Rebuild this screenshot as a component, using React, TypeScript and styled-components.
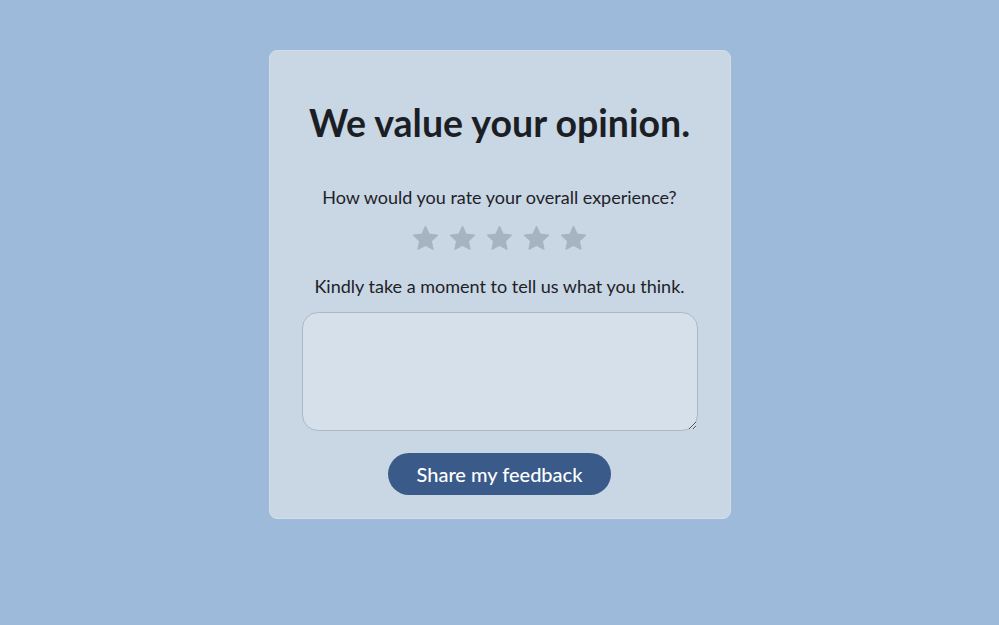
import styled, { createGlobalStyle } from 'styled-components';

const GlobalStyle = createGlobalStyle`
  html, body {
    margin: 0;
    padding: 0;
    background: #9dbadb;
  }
  body {
    font-family: "Lato", "Noto Sans", sans-serif;
  }
`;

const Page = styled.div`
  width: 100%;
  min-height: 625px;
  display: flex;
  justify-content: center;
  align-items: flex-start;
  padding-top: 50px;
  box-sizing: border-box;
`;

const Card = styled.div`
  width: 462px;
  box-sizing: border-box;
  background: #c9d6e3;
  border: 1px solid #d3dde8;
  border-radius: 8px;
  padding: 48px 33px 23px;
  display: flex;
  flex-direction: column;
  align-items: center;
  text-align: center;
`;

const Title = styled.h1`
  margin: 0;
  font-size: 37.5px;
  font-weight: 700;
  color: #1b1f25;
  line-height: 48px;
  white-space: nowrap;
`;

const Prompt = styled.p<{ $top: number }>`
  margin: ${({ $top }) => $top}px 0 0;
  font-size: 18px;
  line-height: 24px;
  color: #1d2229;
  white-space: nowrap;
`;

const Stars = styled.div`
  display: flex;
  gap: 8px;
  margin-top: 15px;
  height: 30px;
`;

const Star = styled.svg`
  width: 29px;
  height: 29px;
  fill: #a7b3c1;
  stroke: #a7b3c1;
  stroke-width: 1.2;
  stroke-linejoin: round;
`;

const Feedback = styled.textarea`
  margin-top: 14px;
  width: 396px;
  height: 119px;
  flex-shrink: 0;
  box-sizing: border-box;
  background: #d5e0ea;
  border: 1px solid #abb9c9;
  border-radius: 16px;
  font-family: inherit;
  font-size: 16px;
  padding: 10px 14px;
  outline: none;
`;

const SubmitButton = styled.button`
  margin-top: 22px;
  width: 223px;
  height: 42px;
  flex-shrink: 0;
  border: none;
  border-radius: 21px;
  background: #3a5a8a;
  color: #ffffff;
  font-family: inherit;
  font-size: 20px;
  font-weight: 500;
  cursor: pointer;
`;

function StarIcon() {
  return (
    <Star viewBox="0 0 24 24">
      <path d="M12 2.2l2.9 6.3 6.9.8-5.1 4.7 1.4 6.8L12 17.4l-6.1 3.4 1.4-6.8-5.1-4.7 6.9-.8z" />
    </Star>
  );
}

export default function App() {
  return (
    <>
      <GlobalStyle />
      <Page>
        <Card>
          <Title>We value your opinion.</Title>
          <Prompt $top={38}>How would you rate your overall experience?</Prompt>
          <Stars>
            {[0, 1, 2, 3, 4].map((i) => (
              <StarIcon key={i} />
            ))}
          </Stars>
          <Prompt $top={20}>Kindly take a moment to tell us what you think.</Prompt>
          <Feedback />
          <SubmitButton>Share my feedback</SubmitButton>
        </Card>
      </Page>
    </>
  );
}
